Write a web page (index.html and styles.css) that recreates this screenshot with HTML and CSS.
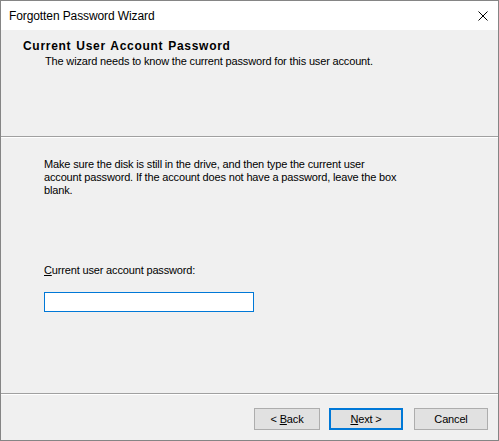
FILE: index.html
```html
<!DOCTYPE html>
<html>
<head>
<meta charset="utf-8">
<link rel="stylesheet" href="styles.css">
</head>
<body>
<div class="window">
  <div class="titlebar">
    <span class="title">Forgotten Password Wizard</span>
    <svg class="close" width="10" height="10" viewBox="0 0 10 10"><path d="M0.5 0.5 L9.5 9.5 M9.5 0.5 L0.5 9.5" stroke="#000" stroke-width="1" fill="none"/></svg>
  </div>
  <div class="header">
    <div class="heading">Current User Account Password</div>
    <div class="subheading">The wizard needs to know the current password for this user account.</div>
  </div>
  <div class="sep"></div>
  <div class="content">
    <p class="intro">Make sure the disk is still in the drive, and then type the current user<br>account password. If the account does not have a password, leave the box<br>blank.</p>
    <label class="label" for="pw"><u>C</u>urrent user account password:</label>
    <input class="field" id="pw" type="password">
  </div>
  <div class="sep"></div>
  <div class="footer">
    <button class="btn back">&lt; <u>B</u>ack</button>
    <button class="btn next"><u>N</u>ext &gt;</button>
    <button class="btn cancel">Cancel</button>
  </div>
</div>
</body>
</html>
```

FILE: styles.css
```css
html, body {
  margin: 0;
  padding: 0;
  background: #f0f0f0;
}
.window {
  width: 499px;
  height: 441px;
  box-sizing: border-box;
  border: 1px solid #858585;
  display: flex;
  flex-direction: column;
  background: #f0f0f0;
  font-family: "Liberation Sans", Arial, sans-serif;
  font-size: 11px;
  line-height: 13px;
  letter-spacing: -0.16px;
  color: #000;
}
.titlebar {
  height: 29px;
  flex: none;
  background: #fff;
  display: flex;
  align-items: center;
  justify-content: space-between;
  padding: 0 10px 0 8px;
}
.title {
  font-family: "Liberation Sans", Arial, sans-serif;
  font-size: 12px;
  line-height: 16px;
  letter-spacing: -0.1px;
  margin-top: 1px;
}
.close {
  display: block;
}
.header {
  height: 106px;
  flex: none;
  box-sizing: border-box;
  padding: 10px 0 0 22px;
}
.heading {
  font-weight: bold;
  font-size: 12px;
  letter-spacing: 0.7px;
  word-spacing: 1px;
}
.subheading {
  margin-top: 2px;
  padding-left: 22px;
}
.sep {
  height: 1px;
  flex: none;
  background: #a0a0a0;
  border-bottom: 1px solid #fff;
}
.content {
  height: 255px;
  flex: none;
  box-sizing: border-box;
  padding: 20px 0 0 43px;
  display: flex;
  flex-direction: column;
  align-items: flex-start;
}
.intro {
  margin: 0;
}
.label {
  margin-top: 67px;
  display: block;
}
.field {
  margin: 15px 0 0 0;
  width: 210px;
  height: 20px;
  box-sizing: border-box;
  border: 1px solid #0078d7;
  background: #fff;
  outline: none;
  padding: 0;
}
.footer {
  flex: 1;
  display: flex;
  align-items: flex-start;
  padding: 13px 0 0 253px;
}
.btn {
  height: 22px;
  box-sizing: border-box;
  background: #e1e1e1;
  border: 1px solid #adadad;
  font-family: "Liberation Sans", Arial, sans-serif;
  font-size: 11px;
  line-height: 13px;
  letter-spacing: -0.16px;
  color: #000;
  padding: 0;
  margin: 0;
}
.back {
  width: 66px;
}
.next {
  width: 74px;
  margin-left: 9px;
  border: 2px solid #0078d7;
}
.cancel {
  width: 74px;
  margin-left: 11px;
}
```
